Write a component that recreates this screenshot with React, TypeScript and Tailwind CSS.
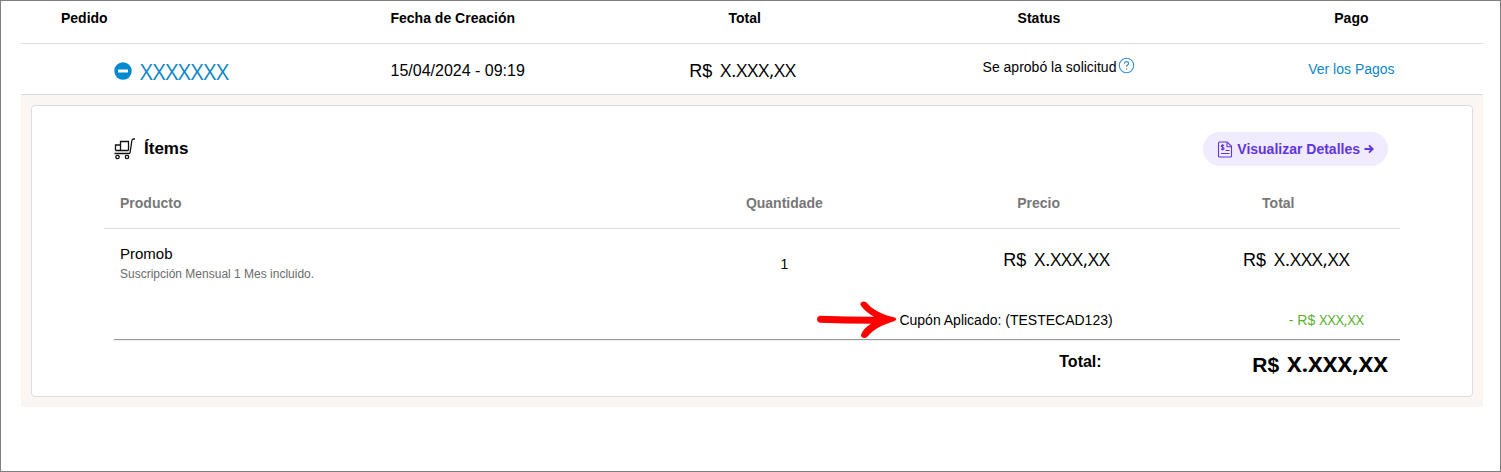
import type { ReactNode } from 'react';

// "R$" uses the UI face, the masked value the text face
function Money({ children, bold = false }: { children: ReactNode; bold?: boolean }) {
  return (
    <span className={bold ? 'inline-flex items-baseline gap-2 text-[21px] font-bold' : 'inline-flex items-baseline gap-2 text-[18px]'}>
      <span>R$</span>
      <span className={bold ? "font-['Noto_Sans',sans-serif] text-[22px]" : "font-['Open_Sans',sans-serif] text-[19px]"}>
        {children}
      </span>
    </span>
  );
}

function CartIcon() {
  return (
    <svg width="22" height="22" viewBox="0 0 22 22" fill="none" stroke="#111" strokeWidth="1.3" aria-hidden>
      <path d="M1.500 12.500V7h5M6.500 12.500v-9h8v9M1.500 12.500h13" />
      <path d="M.5 15.500h14.500c.8 0 1-.4 1.100-1L17.800 3c.2-1.500.7-2 1.600-2H21" />
      <circle cx="3.500" cy="19" r="1.700" />
      <circle cx="13" cy="19" r="1.700" />
    </svg>
  );
}

function InvoiceIcon() {
  return (
    <svg width="16" height="17" viewBox="0 0 16 17" fill="none" stroke="#5f35dd" strokeWidth="1.1" aria-hidden>
      <path d="M1.500 2c0-.6.400-1 1-1h7.700l4.300 4.300v9.700c0 .6-.4 1-1 1h-11c-.6 0-1-.4-1-1z" />
      <path d="M10 1.500v4.200h4.300" />
      <path d="M7 4.700c-.3-.5-.8-.7-1.400-.7-.8 0-1.400.4-1.400 1.100 0 1.500 2.900.8 2.900 2.400 0 .7-.6 1.100-1.500 1.100-.7 0-1.300-.3-1.600-.8M5.600 3.200v6.200" />
      <path d="M8.500 9.500h4M4 12.500h8.500" />
    </svg>
  );
}

function RedArrow() {
  return (
    <svg width="80" height="38" viewBox="0 0 80 38" fill="#ff0000" aria-hidden>
      <path d="M3 14.800c18 .6 36 .9 54 1C51.500 12.500 46.500 8.500 43.800 4.500 42.300 1.200 46.300-.8 49.500 1.500 55 8.500 65 13.500 77.500 16.600c2.200.7 2.200 2.600 0 3.300C66 23.500 56.500 28 50.500 35.500c-2.700 3.100-7.600 1-6.300-2.300 1.800-4.200 5-7.600 9.800-10.400-17-.1-34-.5-51-1-4-.5-4-6.600 0-7z" />
    </svg>
  );
}

export default function App() {
  return (
    <main className="min-h-screen border border-[#7f7f7f] bg-white pl-5 pr-[17px] font-['Liberation_Sans',Arial,sans-serif] text-black">
      <table className="w-full table-fixed border-separate border-spacing-0">
        <colgroup>
          <col className="w-[25%]" />
          <col className="w-[14%]" />
          <col className="w-[21%]" />
          <col className="w-[22%]" />
          <col className="w-[18%]" />
        </colgroup>
        <thead>
          <tr className="h-[43px] text-sm [&>th]:border-b [&>th]:border-[#dcdcdc] [&>th]:pb-2 [&>th]:font-bold">
            <th scope="col" className="pl-10 text-left">Pedido</th>
            <th scope="col" className="pl-1 text-left">Fecha de Creación</th>
            <th scope="col">Total</th>
            <th scope="col" className="pr-10">Status</th>
            <th scope="col">Pago</th>
          </tr>
        </thead>
        <tbody>
          <tr className="h-[51px] [&>td]:border-b [&>td]:border-[#dcdcdc]">
            <td className="pl-[93px] pt-1">
              <div className="flex items-center gap-2">
                <button type="button" aria-label="Ocultar ítems" className="flex">
                  <svg width="18" height="18" viewBox="0 0 18 18" aria-hidden>
                    <circle cx="9" cy="9" r="8.700" fill="#0088d1" />
                    <rect x="4" y="7.500" width="10" height="3" rx=".5" fill="#fff" />
                  </svg>
                </button>
                <a href="#pedido" className="font-['Open_Sans',sans-serif] text-[22px] leading-6 text-[#0d87c9]">
                  XXXXXXX
                </a>
              </div>
            </td>
            <td className="pl-1 pt-1 text-base">15/04/2024 - 09:19</td>
            <td className="pr-1 pt-1 text-center leading-6">
              <Money>X.XXX,XX</Money>
            </td>
            <td className="pb-1 text-sm">
              <div className="flex items-start justify-center gap-0.5">
                <span>Se aprobó la solicitud</span>
                <button type="button" aria-label="Ayuda" className="flex">
                  <svg width="17" height="17" viewBox="0 0 17 17" fill="none" stroke="#3d8fcf" aria-hidden>
                    <circle cx="8.500" cy="8.500" r="7.200" strokeWidth="1.1" />
                    <path d="M6.500 6.700c0-1.200.8-2 2-2s2.100.7 2.100 1.800c0 1.500-2 1.600-2 3.300M8.600 11.300v1.200" strokeWidth="1.200" />
                  </svg>
                </button>
              </div>
            </td>
            <td className="text-center text-sm">
              <a href="#pagos" className="text-[#0d87c9]">Ver los Pagos</a>
            </td>
          </tr>

          {/* expanded order */}
          <tr>
            <td colSpan={5} className="bg-[#f9f6f4] p-2.5">
              <section className="rounded border border-[#dcdcdc] bg-white pb-2.5 pl-[72px] pr-[72px] pt-[26px]">
                <div className="flex items-center justify-between pl-2.5 pr-3">
                  <h2 className="flex items-center gap-2 text-[17px] font-bold">
                    <CartIcon />
                    Ítems
                  </h2>
                  <a
                    href="#detalles"
                    className="flex h-[34px] items-center gap-1 rounded-full bg-[#f0ebff] px-3.5 text-sm font-bold text-[#5f35dd]"
                  >
                    <InvoiceIcon />
                    Visualizar Detalles
                    <svg width="10" height="10" viewBox="0 0 10 10" fill="none" stroke="currentColor" strokeWidth="1.900" aria-hidden>
                      <path d="M.5 5H8.500M5 1.300 8.700 5 5 8.700" />
                    </svg>
                  </a>
                </div>

                <table className="mt-3 w-full table-fixed border-separate border-spacing-0">
                  <colgroup>
                    <col className="w-[42%]" />
                    <col className="w-[21%]" />
                    <col className="w-[21%]" />
                    <col className="w-[16%]" />
                  </colgroup>
                  <thead>
                    <tr className="h-[51px] text-sm text-[#777] [&>th]:border-b [&>th]:border-[#dcdcdc] [&>th]:font-bold">
                      <th scope="col" className="pl-4 text-left">Producto</th>
                      <th scope="col">Quantidade</th>
                      <th scope="col" className="pr-9">Precio</th>
                      <th scope="col" className="pr-9">Total</th>
                    </tr>
                  </thead>
                  <tbody>
                    <tr className="h-[71px] text-center text-sm">
                      <td className="pb-0.5 pl-4 text-left">
                        <div className="text-[15px] leading-5">Promob</div>
                        <div className="text-xs leading-5 text-[#6b6b6b]">Suscripción Mensual 1 Mes incluido.</div>
                      </td>
                      <td className="pb-0.5">1</td>
                      <td className="pb-2.5">
                        <Money>X.XXX,XX</Money>
                      </td>
                      <td className="pb-2.5">
                        <Money>X.XXX,XX</Money>
                      </td>
                    </tr>
                  </tbody>
                </table>

                <dl>
                  <div className="flex h-[39px] items-center">
                    <dt className="flex w-[84%] items-center justify-end gap-0.5 pr-20 text-sm">
                      <RedArrow />
                      Cupón Aplicado: (TESTECAD123)
                    </dt>
                    <dd className="flex flex-1 items-baseline justify-end gap-1 pr-9 text-sm text-[#5bb12f]">
                      <span>- R$</span>
                      <span className="font-['Noto_Sans',sans-serif]">XXX,XX</span>
                    </dd>
                  </div>
                  <div className="ml-2.5 h-0.5 border-t border-[#999] bg-[#eee]" />
                  <div className="flex h-[45px] items-center">
                    <dt className="w-[84%] pb-1 pr-[91px] text-right text-base font-bold">Total:</dt>
                    <dd className="flex-1 pr-3 text-right">
                      <Money bold>X.XXX,XX</Money>
                    </dd>
                  </div>
                </dl>
              </section>
            </td>
          </tr>
        </tbody>
      </table>
    </main>
  );
}
